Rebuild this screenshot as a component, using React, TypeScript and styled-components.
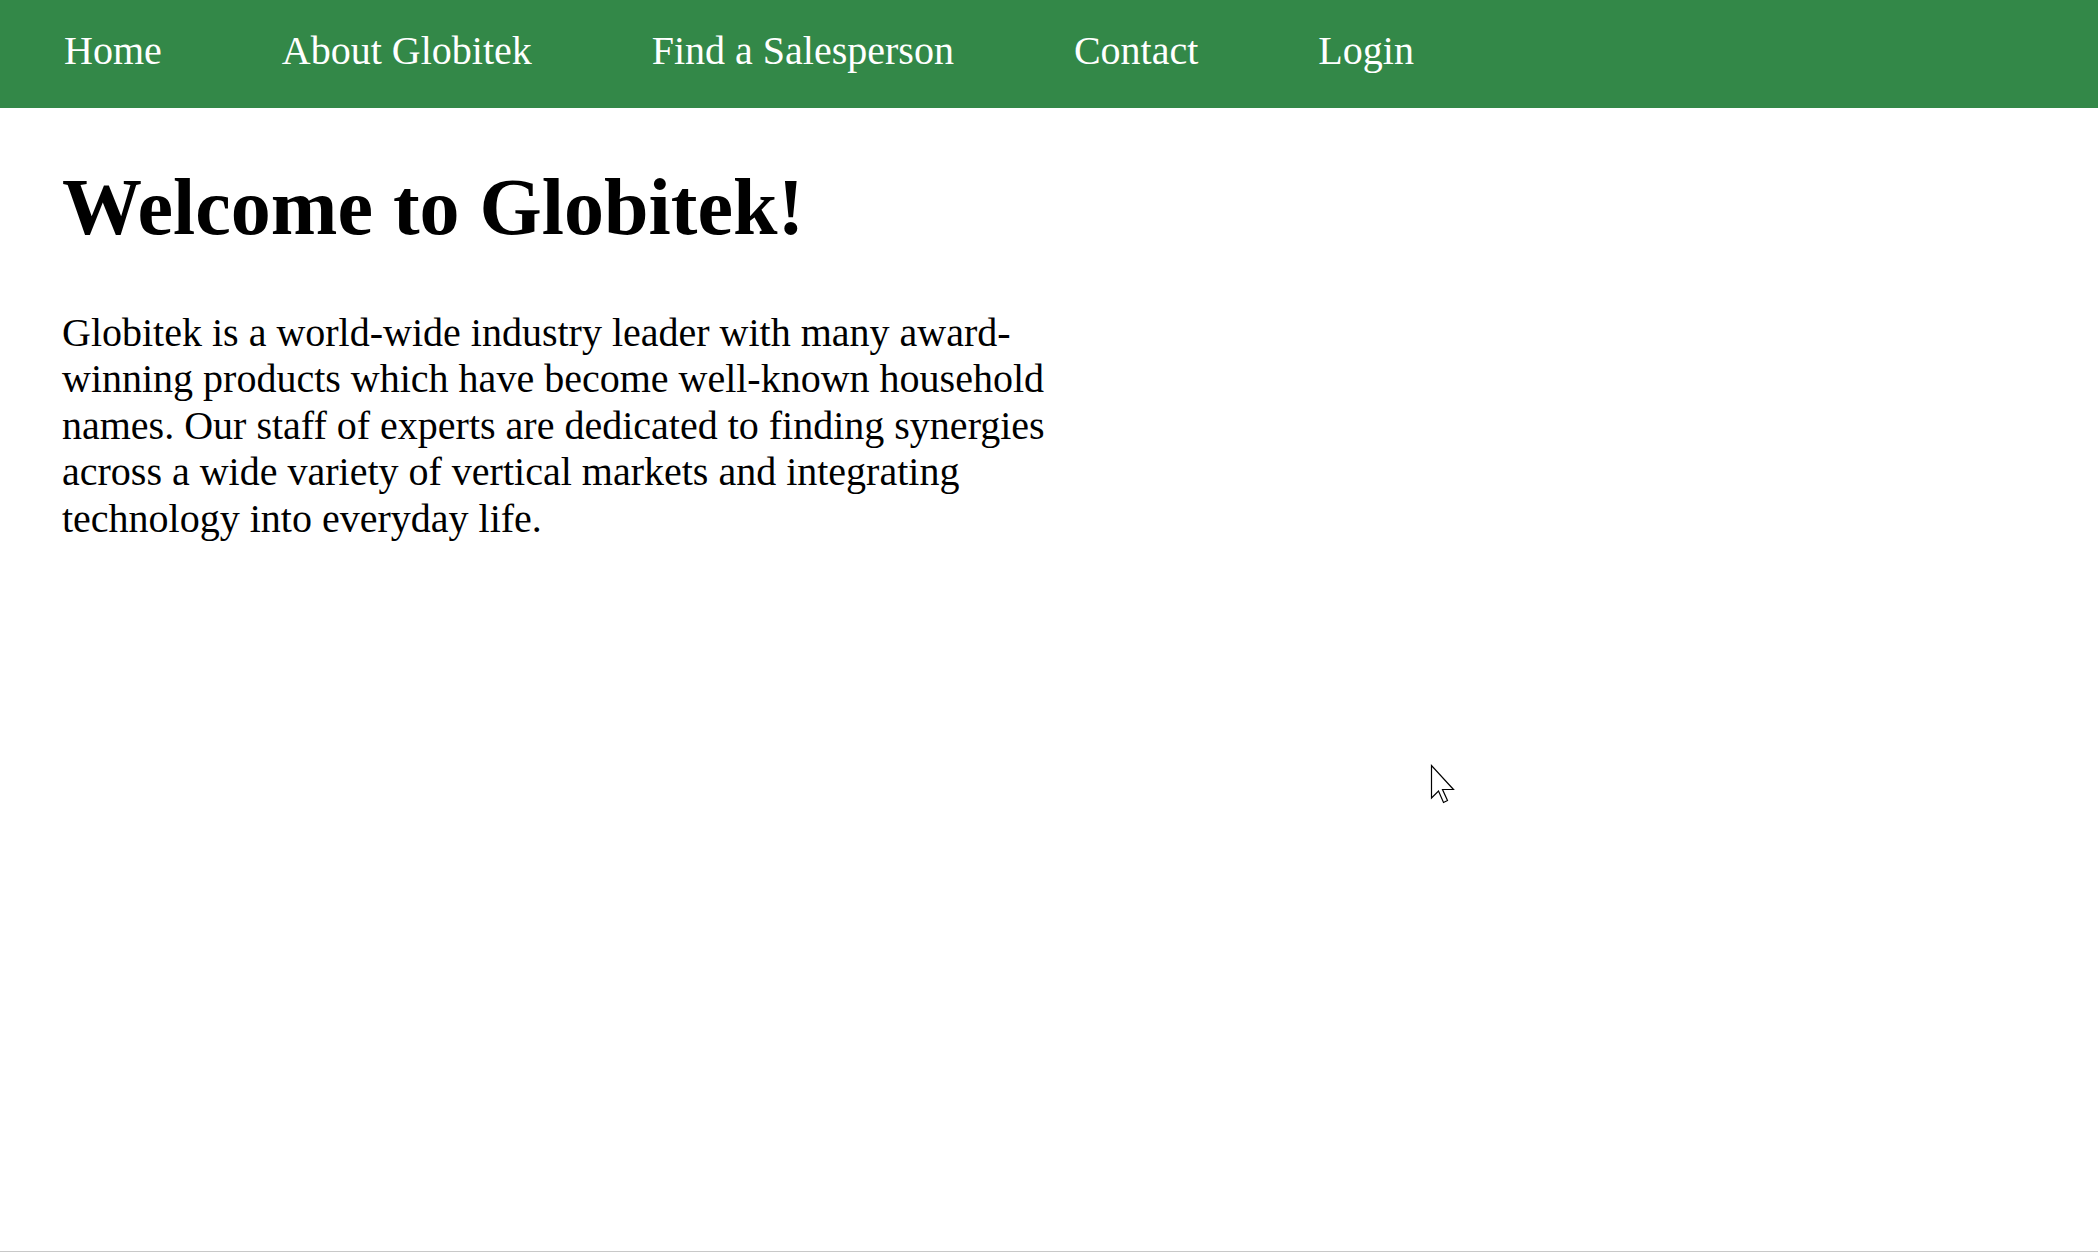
import React from "react";
import styled, { createGlobalStyle } from "styled-components";

const GlobalStyle = createGlobalStyle`
  html, body {
    margin: 0;
    padding: 0;
    background: #ffffff;
  }
  body {
    font-family: "Liberation Serif", "Times New Roman", serif;
    color: #000;
    min-height: 1252px;
    box-sizing: border-box;
    border-bottom: 1px solid #c8c8c8;
    position: relative;
  }
`;

const NavBar = styled.nav`
  height: 108px;
  box-sizing: border-box;
  background: #338848;
  display: flex;
  align-items: center;
  gap: 120px;
  padding: 0 64px 8px;
`;

const NavLink = styled.a`
  font-family: "Liberation Serif", "Times New Roman", serif;
  font-size: 40px;
  color: #ffffff;
  text-decoration: none;
  white-space: nowrap;
`;

const Main = styled.main`
  padding: 0 62px;
`;

const Title = styled.h1`
  font-size: 80px;
  font-weight: bold;
  margin: 0.67em 0 57px;
`;

const Intro = styled.p`
  font-size: 40px;
  line-height: 46.5px;
  max-width: 1030px;
  margin: 0;
`;

const Cursor = styled.svg`
  position: absolute;
  left: 1430px;
  top: 764px;
  width: 26px;
  height: 40px;
  pointer-events: none;
`;

const links = ["Home", "About Globitek", "Find a Salesperson", "Contact", "Login"];

export default function App() {
  return (
    <>
      <GlobalStyle />
      <NavBar>
        {links.map((l) => (
          <NavLink key={l} href="#">
            {l}
          </NavLink>
        ))}
      </NavBar>
      <Main>
        <Title>Welcome to Globitek!</Title>
        <Intro>
          Globitek is a world-wide industry leader with many award-winning products
          which have become well-known household names. Our staff of experts are
          dedicated to finding synergies across a wide variety of vertical markets and
          integrating technology into everyday life.
        </Intro>
      </Main>
      <Cursor viewBox="0 0 26 40">
        <path
          d="M1.5 1.5 L1.5 34 L8.5 27 L13.5 38.5 L17.5 36.5 L12.5 25.5 L23.5 25.5 Z"
          fill="#ffffff"
          stroke="#000000"
          strokeWidth="1.2"
          strokeLinejoin="miter"
        />
      </Cursor>
    </>
  );
}
